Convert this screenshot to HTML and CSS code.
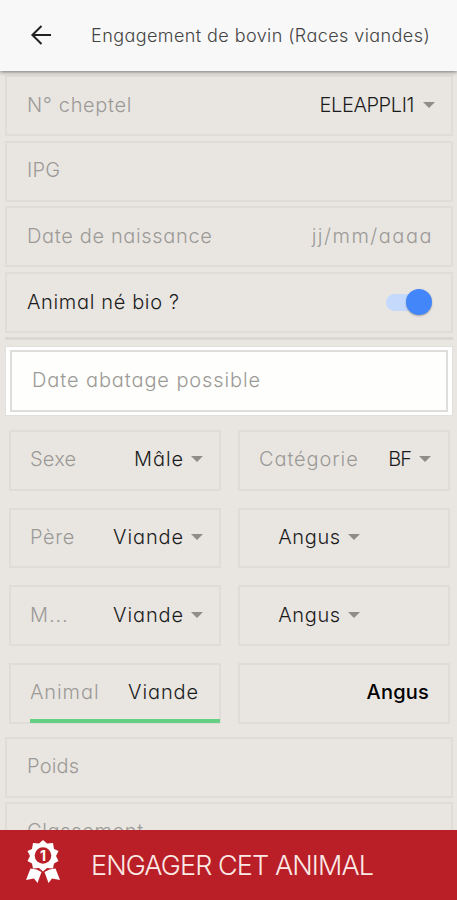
FILE: index.html
```html
<!DOCTYPE html>
<html lang="fr">
<head>
<meta charset="utf-8">
<title>Engagement de bovin</title>
<link rel="stylesheet" href="styles.css">
</head>
<body>
<div class="app">
  <header class="topbar">
    <svg class="back" width="22" height="20" viewBox="0 0 22 20"><path d="M21 10H2.200M11.500 1L2.400 10L11.500 19" fill="none" stroke="#222" stroke-width="2"/></svg>
    <h1>Engagement de bovin (Races viandes)</h1>
  </header>
  <main class="form">
    <div class="field first"><span class="label">N° cheptel</span><span class="value code">ELEAPPLI1</span><i class="caret"></i></div>
    <div class="field"><span class="label ipg">IPG</span></div>
    <div class="field"><span class="label">Date de naissance</span><span class="value hint">jj/mm/aaaa</span></div>
    <div class="field bio"><span class="dark">Animal né bio ?</span><span class="switch"><span class="knob"></span></span></div>
    <div class="divider"></div>
    <div class="panel"><div class="field white"><span class="label wide">Date abatage possible</span></div></div>
    <div class="grid">
      <div class="field"><span class="label sex">Sexe</span><span class="value wide">Mâle</span><i class="caret"></i></div>
      <div class="field"><span class="label wide">Catégorie</span><span class="value bf">BF</span><i class="caret"></i></div>
      <div class="field"><span class="label">Père</span><span class="value wide">Viande</span><i class="caret"></i></div>
      <div class="field breed"><span class="value">Angus</span><i class="caret"></i></div>
      <div class="field"><span class="label wide">M...</span><span class="value wide">Viande</span><i class="caret"></i></div>
      <div class="field breed"><span class="value">Angus</span><i class="caret"></i></div>
      <div class="field active"><span class="label wide">Animal</span><span class="value wide">Viande</span></div>
      <div class="field result"><span class="value">Angus</span></div>
    </div>
    <div class="field weight"><span class="label ipg">Poids</span></div>
    <div class="field grade"><span class="label">Classement</span></div>
  </main>
  <footer class="submit">
    <svg width="34" height="44" viewBox="0 0 34 44">
      <path fill="#fff" d="M17 0l4 3.500 6-.5 1 6 4.500 2-2.500 5 2.500 5-4.500 2.500-1 5-6-.5-4 3.500-4-3.500-6 .5-1-5L1.500 21 4 16 1.500 11 6 9l1-6 6 .5z"/>
      <circle cx="17" cy="15.500" r="8.300" fill="#ba1f28"/>
      <path fill="#fff" d="M4.500 28.500l6 1 5 2.500-4 11-3.500-4.500L0 40zM29.500 28.500l-6 1-5 2.500 4 11 3.500-4.500L34 40z"/>
      <text x="17" y="20.500" text-anchor="middle" class="rank">1</text>
    </svg>
    <span>ENGAGER CET ANIMAL</span>
  </footer>
</div>
</body>
</html>
```
FILE: styles.css
```css
* { box-sizing: border-box; }
body {
  margin: 0;
  background: #e9e6e2;
  font-family: Inter, "Liberation Sans", sans-serif;
  font-feature-settings: "cv11";
  font-weight: 300;
  font-size: 20px;
  color: #1c1c1c;
}
.app { height: 900px; display: flex; flex-direction: column; overflow: hidden; }
.topbar {
  position: relative;
  z-index: 1;
  flex: 0 0 71px;
  display: flex;
  align-items: center;
  padding: 0 0 1px 30px;
  background: #f8f8f8;
  box-shadow: 0 1px 4px rgba(0, 0, 0, .5);
}
h1 { margin: 0 0 0 39px; font-size: 18px; font-weight: 300; color: #444; letter-spacing: .42px; white-space: nowrap; }
.form { flex: 1; min-height: 0; overflow: hidden; padding: 4px 4px 0 5px; }
.field {
  display: flex;
  align-items: center;
  height: 61px;
  margin-bottom: 4.500px;
  padding: 0 19px 2px 20px;
  border: 2px solid #dfddd9;
  letter-spacing: .65px;
  white-space: nowrap;
}
.bio { padding-bottom: 0; }
.label { color: #9c9a97; }
.wide { letter-spacing: .9px; }
.ipg, .sex { letter-spacing: .2px; }
.value { margin-left: auto; }
.hint { color: #9c9a97; letter-spacing: 1.500px; margin-right: -1px; }
.code { letter-spacing: -.4px; }
.bf { letter-spacing: -1px; }
.caret {
  margin-left: 7px;
  border: 6px solid transparent;
  border-top-color: #8f8d8a;
  border-bottom: 0;
}
.first .caret { margin: 0 -3px 0 9px; }
.bf + .caret { margin: 0 1px 0 8px; }
.switch { display: flex; justify-content: flex-end; align-items: center; width: 46px; height: 17px; margin-left: auto; border-radius: 9px; background: #c5d9fc; }
.knob { width: 26px; height: 26px; border-radius: 50%; background: #4386f9; box-shadow: 0 1px 2px rgba(0, 0, 0, .3); }
.divider { height: 3px; margin-bottom: 6px; background: #d9d8d4; }
.panel { height: 70px; padding: 3px 4px; border: 1px solid #e2e0dc; background: #fff; }
.white { height: 62px; margin: 0; padding-bottom: 3px; background: #fefefc; }
.grid { display: grid; grid-template-columns: 212px 212px; gap: 17px 17px; padding: 14px 4px 13px; }
.grid .field { height: 60.700px; margin: 0; padding: 0 16px 2px 19px; }
.grid .breed { justify-content: center; padding: 0 50px 2px 0; }
.breed .value { margin: 0; }
.grid .active { position: relative; padding-right: 20px; }
.active::after { content: ""; position: absolute; left: 19px; right: -1px; bottom: -1px; height: 4px; background: #65cf84; }
.grid .result { padding-right: 19px; font-weight: 500; color: #000; letter-spacing: .2px; }
.grade { padding-bottom: 4px; }
.submit {
  position: relative;
  z-index: 1;
  flex: 0 0 70px;
  display: flex;
  align-items: center;
  padding: 0 0 6px 26px;
  background: #ba1f28;
  color: #fbe9e6;
  font-size: 27px;
  letter-spacing: -.9px;
  white-space: nowrap;
}
.submit span { margin: 6px 0 0 31px; }
.rank { font: 700 14px Inter, sans-serif; letter-spacing: 0; fill: #fff; }
```
